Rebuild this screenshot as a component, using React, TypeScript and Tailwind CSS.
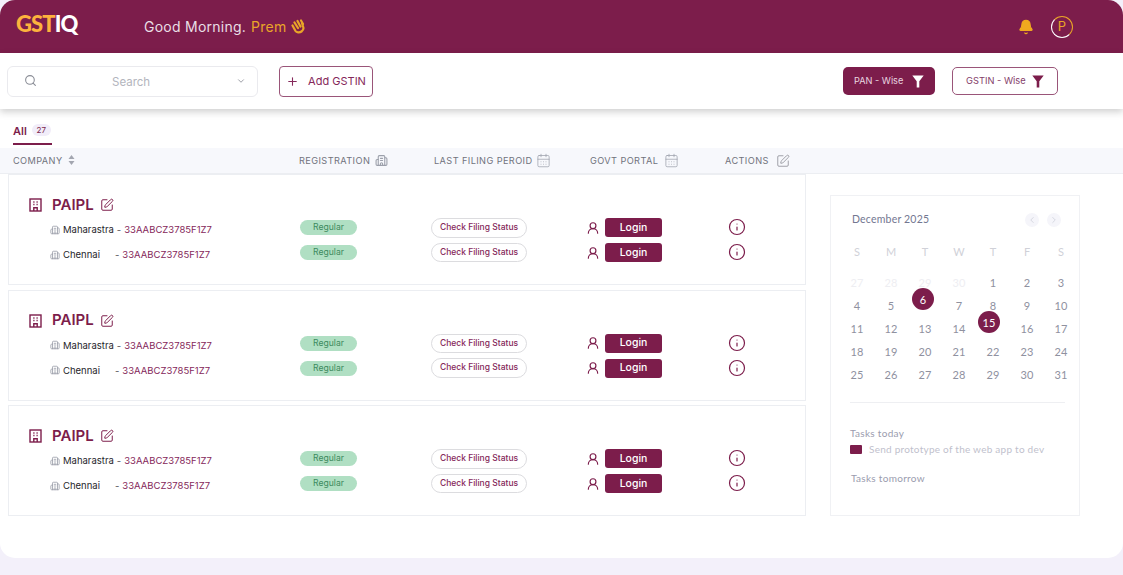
import { Bell, Building2, CalendarDays, ChevronDown, ChevronLeft, ChevronRight, Info, Plus, Search, SquarePen, UserRound } from "lucide-react";

const inter = "font-['Inter','Liberation_Sans',sans-serif]";
const lato = "font-['Lato','Open_Sans',sans-serif]";

const rows = [
  { city: "Maharastra", gap: "ml-[3px]", id: "ml-[3px]" },
  { city: "Chennai", gap: "ml-[15px]", id: "ml-[3px]" },
];

const days = [
  27, 28, 29, 30, 1, 2, 3, 4, 5, 6, 7, 8, 9, 10, 11, 12, 13, 14, 15, 16, 17, 18, 19, 20, 21, 22, 23, 24, 25, 26, 27, 28, 29, 30, 31,
];

function Funnel({ color }: { color: string }) {
  return (
    <svg width="12" height="13" viewBox="0 0 12 13" fill={color}>
      <path d="M0.3 0.5h11.4L7.3 6.2V12.5H4.7V6.2z" />
    </svg>
  );
}

function Clap() {
  return (
    <svg width="14" height="15" viewBox="0 0 14 15" fill="none" stroke="#e9a528" strokeWidth="2.2" strokeLinecap="round">
      <path d="M1.500 6.500l3 5.500c1 1.500 4 2 6 .5s2.500-3 1.500-5L11 4" />
      <path d="M3.500 3.500l3.500 5.500M6.500 2l3 5.500M10 1.500l2 3.500" />
    </svg>
  );
}

function SortIcon() {
  return (
    <svg width="7" height="10" viewBox="0 0 7 10" fill="#a3a6b0">
      <path d="M3.500 0L6.500 4H0.500zM3.500 10L0.500 6h6z" />
    </svg>
  );
}

// square office block used next to the company name
function CompanyIcon() {
  return (
    <svg width="13" height="14" viewBox="0 0 13 14" fill="none" stroke="#7c1d4b" strokeWidth="1.400">
      <rect x="1" y="1" width="11" height="12" />
      <path d="M4.800 13V9.700h3.400V13" />
      <path d="M4.300 4h1.200M7.500 4h1.200M4.300 6.500h1.200M7.500 6.500h1.200" />
    </svg>
  );
}

function CompanyCard() {
  return (
    <div className="flex h-[111px] w-[798px] border border-[#eceef2] bg-white">
      <div className="w-[291px] pl-[20px] pt-[20px]">
        <div className="flex h-[20px] items-center">
          <CompanyIcon />
          <span className="ml-[10px] text-[15px] font-semibold text-[#7c1d4b]">PAIPL</span>
          <SquarePen size={14} strokeWidth={1.7} className="ml-[6px] text-[#7c1d4b]" />
        </div>
        <div className="mt-[8px] flex flex-col gap-[12px] pl-[21px] text-[9.500px] leading-[13px]">
          {rows.map((r) => (
            <div key={r.city} className="flex items-center">
              <Building2 size={10} className="text-[#9ca0ab]" />
              <span className="ml-[3px] text-[#26262b]">{r.city}</span>
              <span className={`${r.gap} text-[#55555c]`}>-</span>
              <span className={`${r.id} text-[#85285a]`}>33AABCZ3785F1Z7</span>
            </div>
          ))}
        </div>
      </div>
      <div className="flex w-[131px] flex-col gap-[10px] pt-[45px]">
        {rows.map((r) => (
          <span key={r.city} className="flex h-[15px] w-[57px] items-center justify-center rounded-full bg-[#b0dfc3] text-[8.600px] text-[#3d8a5e]">
            Regular
          </span>
        ))}
      </div>
      <div className="flex w-[156px] flex-col gap-[5px] pt-[43px]">
        {rows.map((r) => (
          <span key={r.city} className="flex h-[19.500px] w-[96px] items-center justify-center rounded-full border border-[#dcdcdf] text-[8.500px] font-medium text-[#85285a]">
            Check Filing Status
          </span>
        ))}
      </div>
      <div className="flex w-[142px] flex-col gap-[6px] pt-[43px]">
        {rows.map((r) => (
          <div key={r.city} className="flex items-center">
            <UserRound size={14} strokeWidth={2} className="-ml-[1px] text-[#7c1d4b]" />
            <span className="ml-[5px] flex h-[19px] w-[57px] items-center justify-center rounded-[3px] bg-[#7c1d4b] text-[10.500px] font-medium text-white">
              Login
            </span>
          </div>
        ))}
      </div>
      <div className="-ml-[1px] flex flex-col gap-[7px] pt-[43px]">
        {rows.map((r) => (
          <Info key={r.city} size={18} strokeWidth={1.6} className="text-[#7c1d4b]" />
        ))}
      </div>
    </div>
  );
}

function HeadCell({ width, label, children }: { width: string; label: string; children: React.ReactNode }) {
  return (
    <div className={`flex items-center gap-[5px] text-[9.200px] tracking-[0.4px] text-[#71737c] ${width}`}>
      {label}
      {children}
    </div>
  );
}

export default function App() {
  return (
    <div className={`h-[575px] w-[1123px] overflow-hidden bg-[#f3f0fa] ${inter}`}>
      <div className="h-[558px] overflow-hidden rounded-[15px] bg-white">
        <header className="flex h-[53px] items-center bg-[#7c1d4b] pl-[16px] pr-[50px]">
          <div className={`mb-[5px] flex h-[24px] w-[128px] items-start text-[22px] font-black leading-[24px] tracking-[-0.9px] ${lato}`}>
            <span className="text-[#fdb23d]">GST</span>
            <span className="text-white">IQ</span>
          </div>
          <div className="flex items-center text-[14px] tracking-[0.25px] text-[#e9dfe5]">
            Good Morning.
            <span className="ml-[5px] text-[#e9a528]">Prem</span>
            <span className="ml-[5px]"><Clap /></span>
          </div>
          <div className="ml-auto flex items-center gap-[17px]">
            <Bell size={16} fill="#f0a91f" stroke="#f0a91f" />
            <span className="flex h-[22px] w-[22px] items-center justify-center rounded-full border border-white border-r-[#e9a528] border-t-[#e9a528] text-[13px] text-[#e9a528]">P</span>
          </div>
        </header>

        <div className="relative flex h-[56px] items-center bg-white pl-[7px] pr-[65px] shadow-[0_3px_7px_rgba(40,40,40,0.22)]">
          <div className="flex h-[31px] w-[251px] items-center rounded-[6px] border border-[#eaeaee] pl-[16px] pr-[11px] text-[11.500px] text-[#b3b5bd]">
            <Search size={13} className="mb-[2px] text-[#8a8d96]" />
            <span className="ml-[75px] pt-[3px]">Search</span>
            <ChevronDown size={10} className="ml-auto text-[#8a8d96]" />
          </div>
          <button className="ml-[21px] flex h-[31px] w-[94px] items-center justify-center gap-[9px] rounded-[4px] border border-[#9a5579] text-[11px] text-[#85285a]">
            <Plus size={13} />
            Add GSTIN
          </button>
          <button className="ml-auto flex h-[28px] w-[92px] items-center gap-[9px] rounded-[5px] bg-[#7c1d4b] pl-[11px] text-[9.200px] text-[#e9d6e0]">
            PAN - Wise
            <Funnel color="#ffffff" />
          </button>
          <button className="ml-[17px] flex h-[28px] w-[106px] items-center gap-[6px] rounded-[5px] border border-[#9a5579] pl-[13px] text-[9.300px] text-[#85406a]">
            GSTIN - Wise
            <Funnel color="#7c1d4b" />
          </button>
        </div>

        <div className="flex h-[36px] items-end pl-[13px]">
          <div className="flex h-[24px] w-[39px] items-start gap-[5px] border-b-2 border-[#7c1d4b] pt-[3px]">
            <span className="text-[11px] font-semibold leading-[14px] text-[#7c1d4b]">All</span>
            <span className="flex h-[12px] w-[19px] items-center justify-center rounded-full bg-[#f1edf9] text-[8px] text-[#7c1d4b]">27</span>
          </div>
        </div>

        <div className="mt-[3px] flex h-[26px] items-center border-b border-[#eceef2] bg-[#f7f8fc] pl-[13px]">
          <HeadCell width="w-[286px]" label="COMPANY">
            <SortIcon />
          </HeadCell>
          <HeadCell width="w-[135px]" label="REGISTRATION">
            <Building2 size={13} className="text-[#9ca0ab]" />
          </HeadCell>
          <HeadCell width="w-[156px]" label="LAST FILING PEROID">
            <CalendarDays size={15} strokeWidth={1.2} className="-ml-[1px] text-[#9ca0ab]" />
          </HeadCell>
          <HeadCell width="w-[135px]" label="GOVT PORTAL">
            <CalendarDays size={15} strokeWidth={1.2} className="ml-[1px] text-[#9ca0ab]" />
          </HeadCell>
          <HeadCell width="w-[100px]" label="ACTIONS">
            <SquarePen size={14} strokeWidth={1.3} className="ml-[2px] text-[#85878f]" />
          </HeadCell>
        </div>

        <div className="flex pl-[8px]">
          <div className="flex flex-col gap-[4.500px]">
            <CompanyCard />
            <CompanyCard />
            <CompanyCard />
          </div>
          <aside className={`ml-[24px] mt-[21px] h-[321px] w-[250px] border border-[#f0f1f4] px-[19px] pt-[16px] ${lato}`}>
            <div className="flex h-[16px] items-center pl-[2px]">
              <span className="text-[10.500px] tracking-[0.2px] text-[#737791]">December 2025</span>
              <span className="ml-auto flex h-[14px] w-[14px] items-center justify-center rounded-full bg-[#f5f5fa]">
                <ChevronLeft size={10} className="text-[#d0d2dc]" />
              </span>
              <span className="-mr-[1px] ml-[8px] flex h-[14px] w-[14px] items-center justify-center rounded-full bg-[#f5f5fa]">
                <ChevronRight size={10} className="text-[#d0d2dc]" />
              </span>
            </div>
            <div className="-mx-[9px] mt-[17px] grid -translate-x-[1px] grid-cols-[repeat(7,34px)] text-center text-[11px] leading-[14px] text-[#d0d1d8]">
              {["S", "M", "T", "W", "T", "F", "S"].map((d, i) => (
                <span key={i}>{d}</span>
              ))}
            </div>
            <div className="-mx-[9px] mt-[12px] grid -translate-x-[1px] grid-cols-[repeat(7,34px)] grid-rows-[repeat(5,23px)] text-center text-[11px] leading-[23px] text-[#8f919f]">
              {days.map((d, i) => {
                if (i === 9 || i === 18) {
                  return (
                    <span key={i} className="relative">
                      <span className={`absolute top-[-6px] flex h-[22px] w-[22px] items-center justify-center rounded-full bg-[#7c1d4b] text-white ${i === 9 ? "left-[4px]" : "left-[2px]"}`}>{d}</span>
                    </span>
                  );
                }
                return (
                  <span key={i} className={i < 4 ? "text-[#eeeef2]" : ""}>
                    {d}
                  </span>
                );
              })}
            </div>
            <div className="-mr-[5px] mt-[16px] border-t border-[#eeeff2]" />
            <div className="mt-[24px] text-[10px] leading-[13px] tracking-[0.3px] text-[#9a9cae]">Tasks today</div>
            <div className="mt-[3px] flex items-center gap-[7px] text-[10px] leading-[13px] tracking-[0.25px] text-[#bfc1cd]">
              <span className="h-[9px] w-[12px] rounded-[1px] bg-[#7c1d4b]" />
              Send prototype of the web app to dev
            </div>
            <div className="mt-[16px] pl-[1px] text-[10px] leading-[13px] tracking-[0.3px] text-[#9a9cae]">Tasks tomorrow</div>
          </aside>
        </div>
      </div>
    </div>
  );
}
